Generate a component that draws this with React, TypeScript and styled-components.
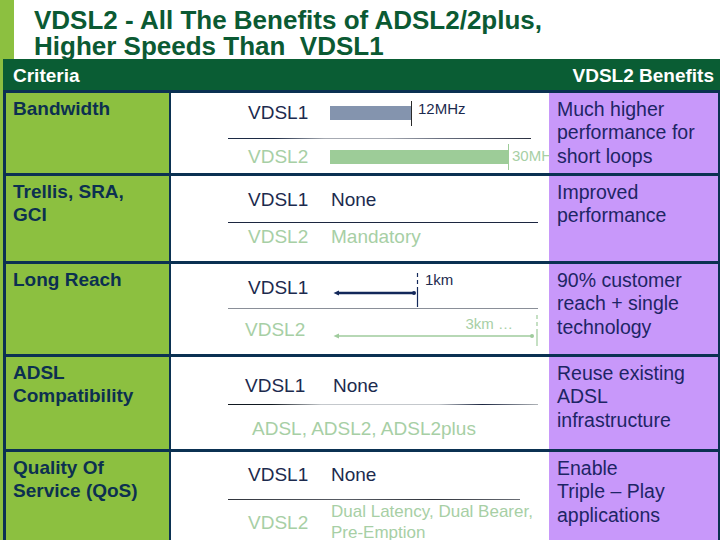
import React from "react";
import styled, { createGlobalStyle } from "styled-components";

const Global = createGlobalStyle`
  html, body { margin: 0; padding: 0; background: #ffffff; }
  body { font-family: "Liberation Sans", Arial, sans-serif; }
`;

const NAVY = "#0b3152";
const LIME = "#8cc040";
const PURPLE = "#c898fa";
const DARK_TEXT = "#1c2a4e";
const LIGHT_GREEN = "#a7cfa5";

const Page = styled.div`
  width: 720px;
  height: 540px;
  overflow: hidden;
  background: ${LIME};
  display: flex;
  flex-direction: column;
`;

const TitleArea = styled.header`
  margin-left: 14px;
  height: 59px;
  flex: none;
  box-sizing: border-box;
  padding: 7px 0 0 20px;
  background: #ffffff;
`;

const Title = styled.h1`
  margin: 0;
  font: bold 26px/26px "Liberation Sans", Arial, sans-serif;
  color: #0b5a33;
  white-space: pre;
`;

const Body = styled.main`
  flex: 1;
  display: flex;
  flex-direction: column;
  padding-left: 3px;
  min-height: 0;
`;

const HeaderBar = styled.div`
  height: 31px;
  flex: none;
  box-sizing: border-box;
  padding: 2px 6px 0 10px;
  display: flex;
  align-items: center;
  justify-content: space-between;
  background: #0a5d34;
  color: #ffffff;
  font: bold 19px/22px "Liberation Sans", Arial, sans-serif;
`;

const Table = styled.section`
  flex: 1;
  display: flex;
  flex-direction: column;
  border-top: 3px solid ${NAVY};
  border-left: 3px solid ${NAVY};
  border-right: 2px solid ${NAVY};
  background: #ffffff;
  min-height: 0;
`;

const Row = styled.div<{ $h?: number }>`
  display: grid;
  grid-template-columns: 165px 378px 169px;
  ${(p) => (p.$h ? `height: ${p.$h}px; flex: none; border-bottom: 3px solid ${NAVY};` : "flex: 1;")}
`;

const CritCell = styled.div`
  box-sizing: border-box;
  background: ${LIME};
  border-right: 2px solid ${NAVY};
  padding: 4px 7px;
  font: bold 19px/23px "Liberation Sans", Arial, sans-serif;
  color: #0c3050;
`;

const MidCell = styled.div<{ $pt: number }>`
  display: flex;
  flex-direction: column;
  padding: ${(p) => p.$pt}px 0 0 57px;
  overflow: hidden;
  background: #ffffff;
`;

const BenefitCell = styled.div`
  box-sizing: border-box;
  background: ${PURPLE};
  padding: 5px 8px;
  font: 19.5px/23.3px "Liberation Sans", Arial, sans-serif;
  color: #1d2565;
`;

const Line = styled.div<{ $h: number; $mt?: number; $pl: number }>`
  display: flex;
  align-items: center;
  height: ${(p) => p.$h}px;
  margin-top: ${(p) => p.$mt ?? 0}px;
  padding-left: ${(p) => p.$pl}px;
  white-space: nowrap;
  flex: none;
`;

const Label = styled.span<{ $w: number; $v2?: boolean; $mt?: number }>`
  flex: none;
  width: ${(p) => p.$w}px;
  margin-top: ${(p) => p.$mt ?? 0}px;
  font: 19px/22px "Liberation Sans", Arial, sans-serif;
  color: ${(p) => (p.$v2 ? LIGHT_GREEN : DARK_TEXT)};
`;

const Value = styled.span<{ $v2?: boolean; $small?: boolean }>`
  font: ${(p) => (p.$small ? "17px/21px" : "19px/22px")} "Liberation Sans", Arial, sans-serif;
  color: ${(p) => (p.$v2 ? LIGHT_GREEN : DARK_TEXT)};
  white-space: ${(p) => (p.$small ? "normal" : "nowrap")};
`;

const Divider = styled.div<{ $w: number; $mt: number; $tone: "dark" | "mix" | "gray" | "split" | "soft" }>`
  flex: none;
  width: ${(p) => p.$w}px;
  height: 1px;
  margin-top: ${(p) => p.$mt}px;
  background: ${(p) =>
    p.$tone === "dark"
      ? "#1c2640"
      : p.$tone === "gray"
      ? "#8a8f98"
      : p.$tone === "mix"
      ? "linear-gradient(90deg, #1c2a44 0%, #1c2a44 15%, #a6aab2 32%, #a6aab2 52%, #6a7080 70%, #2a3040 100%)"
      : p.$tone === "split"
      ? "linear-gradient(90deg, #111820 0%, #111820 14%, #c4c8cc 30%, #c4c8cc 68%, #1c2640 82%, #b0b4b8 100%)"
      : "linear-gradient(90deg, #30343c 0%, #5a5e66 40%, #30343c 70%, #6a6e76 100%)"};
`;

const Bar = styled.span<{ $w: number; $color: string }>`
  flex: none;
  display: block;
  width: ${(p) => p.$w}px;
  height: 14px;
  background: ${(p) => p.$color};
`;

const Tick = styled.span<{ $h: number; $color: string }>`
  flex: none;
  display: block;
  width: 1px;
  height: ${(p) => p.$h}px;
  background: ${(p) => p.$color};
`;

const Caption = styled.span<{ $v2?: boolean; $ml?: number; $lift?: number }>`
  flex: none;
  font: 15px/17px "Liberation Sans", Arial, sans-serif;
  color: ${(p) => (p.$v2 ? LIGHT_GREEN : DARK_TEXT)};
  margin-left: ${(p) => p.$ml ?? 0}px;
  margin-bottom: ${(p) => p.$lift ?? 0}px;
`;

const Reach = styled.div<{ $h: number }>`
  display: flex;
  align-items: stretch;
  height: ${(p) => p.$h}px;
`;

const ArrowCol = styled.div<{ $w: number; $pt: number }>`
  width: ${(p) => p.$w}px;
  display: flex;
  flex-direction: column;
  padding-top: ${(p) => p.$pt}px;
  box-sizing: border-box;
`;

const ReachCaption = styled.span<{ $mr: number }>`
  align-self: flex-end;
  margin-right: ${(p) => p.$mr}px;
  font: 15px/17px "Liberation Sans", Arial, sans-serif;
  color: ${LIGHT_GREEN};
`;

const TopCaption = styled.span`
  align-self: flex-start;
  margin: -2px 0 0 6px;
  font: 15px/17px "Liberation Sans", Arial, sans-serif;
  color: ${DARK_TEXT};
`;

function Arrow({ w, color, sw }: { w: number; color: string; sw: number }) {
  return (
    <svg width={w} height={8} viewBox={`0 0 ${w} 8`} style={{ display: "block" }}>
      <line x1={4} y1={4} x2={w - 2} y2={4} stroke={color} strokeWidth={sw} />
      <path d="M0.5 4 L6 1.6 L6 6.4 Z" fill={color} />
      <circle cx={w - 2} cy={4} r={2} fill={color} />
    </svg>
  );
}

function DashTick({ h, split, color, w = 6 }: { h: number; split: number; color: string; w?: number }) {
  const x = w / 2;
  return (
    <svg width={w} height={h} viewBox={`0 0 ${w} ${h}`} style={{ display: "block", flex: "none" }}>
      <line x1={x} y1={0} x2={x} y2={split} stroke={color} strokeWidth={1.2} strokeDasharray="4 3" />
      <line x1={x} y1={split} x2={x} y2={h} stroke={color} strokeWidth={1.2} />
    </svg>
  );
}

export default function App() {
  return (
    <>
      <Global />
      <Page>
        <TitleArea>
          <Title>{"VDSL2 - All The Benefits of ADSL2/2plus,\nHigher Speeds Than  VDSL1"}</Title>
        </TitleArea>
        <Body>
          <HeaderBar>
            <span>Criteria</span>
            <span>VDSL2 Benefits</span>
          </HeaderBar>
          <Table>
            <Row $h={80}>
              <CritCell>Bandwidth</CritCell>
              <MidCell $pt={7}>
                <Line $h={26} $pl={20}>
                  <Label $w={82}>VDSL1</Label>
                  <Bar $w={81} $color="#8494ae" />
                  <Tick $h={25} $color="#2a2a2a" />
                  <Caption $ml={6} $lift={10}>12MHz</Caption>
                </Line>
                <Divider $w={303} $mt={12} $tone="mix" />
                <Line $h={26} $mt={5} $pl={20}>
                  <Label $w={82} $v2>VDSL2</Label>
                  <Bar $w={178} $color="#9dcc98" />
                  <Tick $h={26} $color="#9dcc98" />
                  <Caption $v2 $ml={3} $lift={4}>30MHz</Caption>
                </Line>
              </MidCell>
              <BenefitCell>
                Much higher
                <br />
                performance for
                <br />
                short loops
              </BenefitCell>
            </Row>

            <Row $h={85}>
              <CritCell>
                Trellis, SRA,
                <br />
                GCI
              </CritCell>
              <MidCell $pt={11}>
                <Line $h={26} $pl={20}>
                  <Label $w={83}>VDSL1</Label>
                  <Value>None</Value>
                </Line>
                <Divider $w={310} $mt={9} $tone="dark" />
                <Line $h={26} $mt={1} $pl={20}>
                  <Label $w={83} $v2>VDSL2</Label>
                  <Value $v2>Mandatory</Value>
                </Line>
              </MidCell>
              <BenefitCell>
                Improved
                <br />
                performance
              </BenefitCell>
            </Row>

            <Row $h={90}>
              <CritCell>Long Reach</CritCell>
              <MidCell $pt={9}>
                <Line $h={34} $pl={20}>
                  <Label $w={85} $mt={-4}>VDSL1</Label>
                  <Reach $h={34}>
                    <ArrowCol $w={83} $pt={16}>
                      <Arrow w={83} color="#13285a" sw={2.4} />
                    </ArrowCol>
                    <DashTick h={34} split={18} color="#13285a" w={3} />
                  </Reach>
                  <TopCaption>1km</TopCaption>
                </Line>
                <Divider $w={310} $mt={1} $tone="gray" />
                <Line $h={31} $mt={6} $pl={17}>
                  <Label $w={88} $v2 $mt={-2}>VDSL2</Label>
                  <Reach $h={31}>
                    <ArrowCol $w={201} $pt={0}>
                      <ReachCaption $mr={21}>3km …</ReachCaption>
                      <Arrow w={201} color="#9fcb9c" sw={1.6} />
                    </ArrowCol>
                    <DashTick h={31} split={16} color="#9fcb9c" />
                  </Reach>
                </Line>
              </MidCell>
              <BenefitCell>
                90% customer
                <br />
                reach + single
                <br />
                technology
              </BenefitCell>
            </Row>

            <Row $h={92}>
              <CritCell>
                ADSL
                <br />
                Compatibility
              </CritCell>
              <MidCell $pt={16}>
                <Line $h={26} $pl={17}>
                  <Label $w={88}>VDSL1</Label>
                  <Value>None</Value>
                </Line>
                <Divider $w={310} $mt={5} $tone="split" />
                <Line $h={26} $mt={11} $pl={24}>
                  <Value $v2>ADSL, ADSL2, ADSL2plus</Value>
                </Line>
              </MidCell>
              <BenefitCell>
                Reuse existing
                <br />
                ADSL
                <br />
                infrastructure
              </BenefitCell>
            </Row>

            <Row>
              <CritCell>
                Quality Of
                <br />
                Service (QoS)
              </CritCell>
              <MidCell $pt={10}>
                <Line $h={26} $pl={20}>
                  <Label $w={83}>VDSL1</Label>
                  <Value>None</Value>
                </Line>
                <Divider $w={292} $mt={11} $tone="soft" />
                <Line $h={44} $mt={0} $pl={20}>
                  <Label $w={83} $v2 $mt={1}>VDSL2</Label>
                  <Value $v2 $small>
                    Dual Latency, Dual Bearer,
                    <br />
                    Pre-Emption
                  </Value>
                </Line>
              </MidCell>
              <BenefitCell>
                Enable
                <br />
                Triple – Play
                <br />
                applications
              </BenefitCell>
            </Row>
          </Table>
        </Body>
      </Page>
    </>
  );
}
